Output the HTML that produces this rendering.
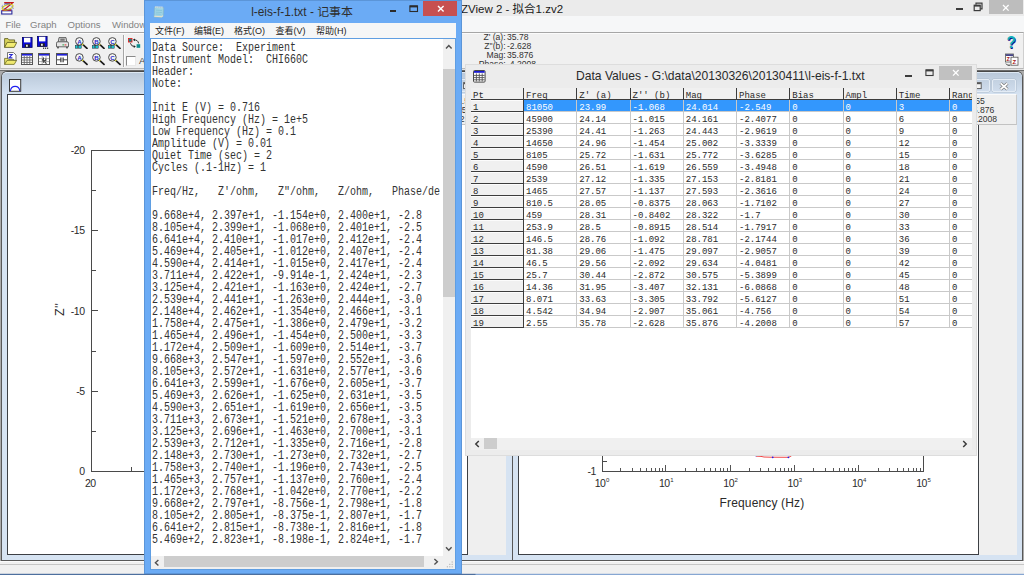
<!DOCTYPE html>
<html>
<head>
<meta charset="utf-8">
<title>ZView 2</title>
<style>
*{box-sizing:border-box;margin:0;padding:0}
html,body{width:1024px;height:575px;overflow:hidden;background:#f0f0f0}
body{font-family:"Liberation Sans","Noto Sans CJK SC",sans-serif;font-size:11px;color:#000;position:relative}
.abs{position:absolute}
#root{position:absolute;left:0;top:0;width:1024px;height:575px;overflow:hidden;background:#f0f0f0}
/* ---------- main ZView window ---------- */
#ztitle{left:0;top:0;width:1024px;height:16px;background:#ebebeb}
#ztitle .cap{left:461px;top:2px;font-size:11.5px;line-height:14px;color:#1a1a1a;white-space:nowrap}
#zmenu{left:0;top:16px;width:1024px;height:16px;background:#f6f7f8}
#zmenu span{position:absolute;top:2px;font-size:9.6px;line-height:13px;color:#838383}
#ztool{left:0;top:32px;width:1024px;height:37px;background:#f0f0f0;border-top:1px solid #a6a6a6;border-left:1px solid #c8c8c8;border-right:1px solid #cfcfcf;border-bottom:1px solid #b8b8b8}
#mdi{left:0;top:69px;width:1024px;height:492px;background:#ababab;border-top:1px solid #e4e4e4}
#mdi i{position:absolute;left:0;top:0;width:1024px;height:1px;background:#6c6c6c}
#status{left:0;top:561px;width:1024px;height:13px;background:#f0f0f0;border-top:1px solid #fafafa}
#status i{position:absolute;left:0;top:2px;width:1024px;height:1px;background:#c6c6c6}
#deskstrip{left:0;top:573px;width:1024px;height:2px;background:linear-gradient(90deg,#4d6f9e 0,#4d6f9e 475px,#86a6d2 476px);border-top:1px solid rgba(240,240,240,0.78)}
.rd{font-size:8.6px;line-height:9px;color:#333;white-space:nowrap}
/* ---------- MDI children ---------- */
.child{background:#d6e3f2;border:1px solid #585858;border-top-color:#484848;border-radius:6px 6px 0 0}
.child .ttl{left:0;top:0;right:0;height:23px;background:linear-gradient(#bac9da,#d6e3f2);border-top:1px solid #dde8f3;border-radius:5px 5px 0 0}
.cbtn{position:absolute;top:7px;height:13px;border:1px solid #e4ecf5;border-radius:2px;background:linear-gradient(#c3d1e1,#cfdcec);box-shadow:0 0 0 0.5px #aebccc}
.plot{background:#fff;border:1px solid #3c3f44}
.side{background:#efefef}
.rpanel{background:#efefef;border-right:1px solid #c9c9c9;border-bottom:1px solid #c2c2c2;border-top:1px solid #fafafa}
.ax{position:absolute;background:#4a4a4a}
.tl{position:absolute;font-size:10.5px;line-height:12px;letter-spacing:-0.5px;color:#2a2a2a;white-space:nowrap}
/* ---------- notepad ---------- */
#np{left:144px;top:0;width:318px;height:574px;background:#6babf5;border:1px solid #5b95d8}
#np .cap{left:-1px;width:316px;top:3.5px;text-align:center;font-size:11.9px;line-height:15px;color:#2e2e2e;white-space:nowrap}
#npmenu{left:5px;top:22px;width:306px;height:15px;background:#f5f6f7}
#npframe{left:5px;top:37px;width:306px;height:532px;background:#5f9ee2}
#npmenu span{position:absolute;top:1px;font-size:9px;line-height:15px;color:#222;white-space:nowrap}
#nptext{left:6px;top:38px;width:292px;height:517px;background:#fff;overflow:hidden}
#nptext pre{position:absolute;left:1px;top:3px;font-family:"Liberation Mono",monospace;font-size:12px;line-height:12px;color:#333;transform:scaleX(0.83333);transform-origin:0 0;white-space:pre}
#npvs{left:298px;top:38px;width:12px;height:517px;background:#f0f0f0}
#nphs{left:6px;top:555px;width:292px;height:13px;background:#f0f0f0}
#npcorner{left:298px;top:555px;width:12px;height:13px;background:#f0f0f0}
.thumb{position:absolute;background:#cdcdcd}
.wbtn{position:absolute}
/* ---------- data values ---------- */
#dv{left:465px;top:64px;width:512px;height:392px;background:#ececec;border:1px solid #dddddd}
#dv .cap{left:110px;top:4px;font-size:12.1px;line-height:15px;color:#2a2a2a;white-space:nowrap}
#grid{left:5px;top:23px;width:501px;height:350px;background:#fff;overflow:hidden}
#dvhs{left:5px;top:373px;width:501px;height:12px;background:#f0f0f0}
.mono{font-family:"Liberation Mono",monospace;font-size:9px;line-height:11px;white-space:pre;color:#2a2a2a}
.mono.sel{color:#fff}
.hl{height:1px;background:#c9c9c9}
.vl{width:1px;background:#c9c9c9}
.dk{background:#3c3c3c}
</style>
</head>
<body>
<div id="root">

<!-- ================= ZView main window ================= -->
<div id="ztitle" class="abs">
  <svg class="abs" style="left:1px;top:1px" width="13" height="14" viewBox="0 0 13 14"><rect x="0.7" y="9.8" width="10.2" height="3.2" fill="#fff" stroke="#2a2a9c" stroke-width="1.1"/><path d="M3.6 2.7h5.4" stroke="#2a2a9c" stroke-width="0.8"/><path d="M3.2 1.7h8.6L2.6 9h7.6" fill="none" stroke="#c41a1a" stroke-width="1.3"/><ellipse cx="6.6" cy="6.2" rx="5.6" ry="2.3" fill="none" stroke="#cfc81c" stroke-width="1.1" transform="rotate(-18 6.6 6.2)"/><ellipse cx="6.6" cy="6.2" rx="5.6" ry="2.6" fill="none" stroke="#3030c0" stroke-width="0.7" stroke-dasharray="0.8 0.9" transform="rotate(14 6.6 6.2)"/></svg>
  <div class="cap abs">ZView 2 - 拟合1.zv2</div>
  <div class="abs" style="left:956px;top:8px;width:6.5px;height:2px;background:#3c3c3c"></div>
  <svg class="abs" style="left:973px;top:2px" width="10" height="10" viewBox="0 0 10 10"><path d="M3 2.8v-1.6h6v5.6h-1.6" fill="none" stroke="#3c3c3c" stroke-width="1.2"/><rect x="1.2" y="3.2" width="6" height="5.4" fill="none" stroke="#3c3c3c" stroke-width="1.2"/><path d="M1.2 3.8h6" stroke="#3c3c3c" stroke-width="1.6"/></svg>
  <div class="abs" style="left:989px;top:0;width:33.5px;height:14px;background:#bdbdbd"></div>
  <svg class="abs" style="left:1002px;top:3.5px" width="8" height="8" viewBox="0 0 8 8"><path d="M1 1l5.6 5.6M6.6 1l-5.6 5.6" stroke="#fff" stroke-width="1.3"/></svg>
</div>
<div id="zmenu" class="abs">
  <span style="left:5.5px">File</span><span style="left:30px">Graph</span><span style="left:67.5px">Options</span><span style="left:112px">Window</span>
</div>
<div id="ztool" class="abs"><div class="abs" style="left:0;top:0;width:1022px;height:1px;background:#fbfbfb"></div></div>
<svg class="abs" style="left:4.3px;top:37px" width="13" height="11" viewBox="0 0 13 11"><path d="M0.6 10.4v-8.8h3.4l1 1.3h5.6v2.4" fill="#d9d35a" stroke="#55551c" stroke-width="0.8"/><path d="M0.6 10.4l2.6-5h9.6l-2.6 5z" fill="#f2ec72" stroke="#55551c" stroke-width="0.8"/></svg>
<svg class="abs" style="left:21.8px;top:37.4px" width="12" height="13" viewBox="0 0 12 13"><rect x="0.4" y="0.4" width="9.7" height="10" fill="#0a0ad8" stroke="#050560" stroke-width="0.8"/><rect x="2" y="0.8" width="6.4" height="4.6" fill="#fff"/><rect x="2.8" y="7.2" width="5" height="3.2" fill="#222"/><rect x="4" y="7.8" width="1.8" height="2" fill="#e8e8e8"/></svg>
<svg class="abs" style="left:36.8px;top:36.2px" width="12" height="13" viewBox="0 0 12 13"><rect x="0.4" y="0.4" width="9.7" height="10" fill="#0a0ad8" stroke="#050560" stroke-width="0.8"/><rect x="2" y="0.8" width="6.4" height="4.6" fill="#fff"/><rect x="2.8" y="7.2" width="5" height="3.2" fill="#222"/><rect x="4" y="7.8" width="1.8" height="2" fill="#e8e8e8"/><rect x="6" y="11.6" width="1.2" height="1.2" fill="#222"/><rect x="8" y="11.6" width="1.2" height="1.2" fill="#222"/><rect x="10" y="11.6" width="1.2" height="1.2" fill="#222"/></svg>
<svg class="abs" style="left:56px;top:37px" width="13" height="12" viewBox="0 0 13 12"><path d="M3 0.6h7l0.8 4.6h-8.6z" fill="#d8d8d8" stroke="#444" stroke-width="0.8"/><rect x="4.3" y="1.6" width="4.4" height="2.2" fill="#777"/><path d="M0.5 6.2q0-1.4 1.4-1.4h9.2q1.4 0 1.4 1.4v3.6h-12z" fill="#e6e6e6" stroke="#444" stroke-width="0.8"/><rect x="1.2" y="9.8" width="1.6" height="1.6" fill="#444"/><rect x="10.2" y="9.8" width="1.6" height="1.6" fill="#444"/><rect x="6.4" y="7.4" width="1.8" height="1" fill="#2aa04a"/><rect x="8.6" y="7.4" width="1.8" height="1" fill="#e03030"/></svg>
<svg class="abs" style="left:74.8px;top:36.8px" width="13" height="12.5" viewBox="0 0 13 12.5"><circle cx="4.4" cy="4.4" r="3.8" fill="#f4f4f4" stroke="#4a4a4a" stroke-width="1"/><text x="4.4" y="6.7" font-family="Liberation Sans,sans-serif" font-size="6.2" font-weight="bold" fill="#2626c8" text-anchor="middle">A</text><path d="M7.4 7.2l4.6 4.2" stroke="#1a1a1a" stroke-width="1.7" stroke-linecap="round"/><path d="M7 6.8l1.3 1.2" stroke="#e8e040" stroke-width="1.2"/><rect x="0.2" y="8.6" width="2.6" height="2.6" fill="#19c8d0" stroke="#123" stroke-width="0.5"/><rect x="3.4" y="8.6" width="2.8" height="2.6" fill="#19c8d0" stroke="#123" stroke-width="0.5"/></svg>
<svg class="abs" style="left:91.6px;top:36.8px" width="13" height="12.5" viewBox="0 0 13 12.5"><circle cx="4.4" cy="4.4" r="3.8" fill="#f4f4f4" stroke="#4a4a4a" stroke-width="1"/><text x="4.4" y="6.7" font-family="Liberation Sans,sans-serif" font-size="6.2" font-weight="bold" fill="#2626c8" text-anchor="middle">B</text><path d="M7.4 7.2l4.6 4.2" stroke="#1a1a1a" stroke-width="1.7" stroke-linecap="round"/><path d="M7 6.8l1.3 1.2" stroke="#e8e040" stroke-width="1.2"/><rect x="0.2" y="8.6" width="2.6" height="2.6" fill="#19c8d0" stroke="#123" stroke-width="0.5"/><rect x="3.4" y="8.6" width="2.8" height="2.6" fill="#19c8d0" stroke="#123" stroke-width="0.5"/></svg>
<svg class="abs" style="left:108.4px;top:36.8px" width="13" height="12.5" viewBox="0 0 13 12.5"><circle cx="4.4" cy="4.4" r="3.8" fill="#f4f4f4" stroke="#4a4a4a" stroke-width="1"/><text x="4.4" y="6.7" font-family="Liberation Sans,sans-serif" font-size="6.2" font-weight="bold" fill="#2626c8" text-anchor="middle">C</text><path d="M7.4 7.2l4.6 4.2" stroke="#1a1a1a" stroke-width="1.7" stroke-linecap="round"/><path d="M7 6.8l1.3 1.2" stroke="#e8e040" stroke-width="1.2"/><rect x="0.2" y="8.6" width="2.6" height="2.6" fill="#19c8d0" stroke="#123" stroke-width="0.5"/><rect x="3.4" y="8.6" width="2.8" height="2.6" fill="#19c8d0" stroke="#123" stroke-width="0.5"/></svg>
<svg class="abs" style="left:4.3px;top:52.4px" width="13" height="13" viewBox="0 0 13 13"><path d="M3.5 0.5h6l2.5 2.5v6h-8.5z" fill="#fff" stroke="#555" stroke-width="0.8"/><path d="M5 2.5h3.2l-3.2 3.4h3.4" fill="none" stroke="#2a2ad0" stroke-width="1.1"/><path d="M0.6 12.4v-6h3l1 1h5.2v1.2" fill="#e9e36a" stroke="#6b6b2a" stroke-width="0.8"/><path d="M0.6 12.4l2.4-4h9.6l-2.4 4z" fill="#efe96f" stroke="#6b6b2a" stroke-width="0.8"/></svg>
<svg class="abs" style="left:21.2px;top:52.8px" width="12" height="12" viewBox="0 0 12 12"><rect x="0.5" y="0.5" width="11" height="11" fill="#fff" stroke="#555" stroke-width="1"/><rect x="1" y="1" width="10" height="1.6" fill="#2222d8"/><path d="M3.25 3v8" stroke="#666" stroke-width="0.9"/><path d="M6 3v8" stroke="#666" stroke-width="0.9"/><path d="M8.75 3v8" stroke="#666" stroke-width="0.9"/><path d="M1 4.6h10" stroke="#666" stroke-width="0.9"/><path d="M1 7h10" stroke="#666" stroke-width="0.9"/><path d="M1 9.4h10" stroke="#666" stroke-width="0.9"/></svg>
<svg class="abs" style="left:37.6px;top:52.8px" width="12" height="12" viewBox="0 0 12 12"><rect x="0.5" y="0.5" width="11" height="11" fill="#fff" stroke="#555" stroke-width="1"/><rect x="1" y="1" width="10" height="1.6" fill="#2222d8"/><path d="M4.2 3v8M8 3v8M1 5.6h10M1 8.6h10" stroke="#999" stroke-width="0.8"/><path d="M4.5 6.2l1.2 3.4l1-1l1.6 2.2M5.4 4.4v3.2h2.4v-2" fill="none" stroke="#222" stroke-width="0.9"/></svg>
<svg class="abs" style="left:56.2px;top:52.8px" width="12" height="12" viewBox="0 0 12 12"><rect x="0.5" y="0.5" width="11" height="11" fill="#fff" stroke="#555" stroke-width="1"/><rect x="1" y="1" width="10" height="1.6" fill="#2222d8"/><path d="M1 6.8h3.8M7.2 6.8h3.8" stroke="#333" stroke-width="0.9"/><path d="M4.9 4.4v4.8M7.1 4.4v4.8" stroke="#222" stroke-width="1.1"/></svg>
<svg class="abs" style="left:74.8px;top:53px" width="13" height="12.5" viewBox="0 0 13 12.5"><circle cx="4.4" cy="4.4" r="3.8" fill="#f4f4f4" stroke="#4a4a4a" stroke-width="1"/><text x="4.4" y="6.7" font-family="Liberation Sans,sans-serif" font-size="6.2" font-weight="bold" fill="#2626c8" text-anchor="middle">A</text><path d="M7.4 7.2l4.6 4.2" stroke="#1a1a1a" stroke-width="1.7" stroke-linecap="round"/><path d="M7 6.8l1.3 1.2" stroke="#e8e040" stroke-width="1.2"/></svg>
<svg class="abs" style="left:91.6px;top:53px" width="13" height="12.5" viewBox="0 0 13 12.5"><circle cx="4.4" cy="4.4" r="3.8" fill="#f4f4f4" stroke="#4a4a4a" stroke-width="1"/><text x="4.4" y="6.7" font-family="Liberation Sans,sans-serif" font-size="6.2" font-weight="bold" fill="#2626c8" text-anchor="middle">B</text><path d="M7.4 7.2l4.6 4.2" stroke="#1a1a1a" stroke-width="1.7" stroke-linecap="round"/><path d="M7 6.8l1.3 1.2" stroke="#e8e040" stroke-width="1.2"/></svg>
<svg class="abs" style="left:108.4px;top:53px" width="13" height="12.5" viewBox="0 0 13 12.5"><circle cx="4.4" cy="4.4" r="3.8" fill="#f4f4f4" stroke="#4a4a4a" stroke-width="1"/><text x="4.4" y="6.7" font-family="Liberation Sans,sans-serif" font-size="6.2" font-weight="bold" fill="#2626c8" text-anchor="middle">C</text><path d="M7.4 7.2l4.6 4.2" stroke="#1a1a1a" stroke-width="1.7" stroke-linecap="round"/><path d="M7 6.8l1.3 1.2" stroke="#e8e040" stroke-width="1.2"/></svg>
<div class="abs" style="left:123px;top:35px;width:1px;height:32px;background:#a6a6a6"></div><div class="abs" style="left:124px;top:35px;width:1px;height:32px;background:#fbfbfb"></div>
<svg class="abs" style="left:128px;top:38px" width="13" height="11" viewBox="0 0 13 11"><rect x="0.4" y="0.4" width="3.6" height="3.6" fill="#0c8c8c" stroke="#e62020" stroke-width="0.9"/><rect x="8.6" y="6.2" width="3.6" height="3.6" fill="#0c8c8c"/><path d="M5.6 1.8q4.6 0 5 3.6" fill="none" stroke="#222" stroke-width="0.9"/><path d="M5 1.8l2-1.4v2.8z" fill="#222"/><path d="M2.4 5.2q0.8 3.4 4.4 3.4" fill="none" stroke="#222" stroke-width="0.9"/><path d="M7.8 8.6l-2-1.4v2.8z" fill="#222"/></svg>
<div class="abs" style="left:126px;top:56px;width:9.5px;height:9.5px;background:#fff;border:1px solid #e8e8e8;border-top-color:#8a8a8a;border-left-color:#8a8a8a"></div>
<div class="abs" style="left:139px;top:55px;font-size:9.5px;line-height:12px;color:#444">All</div>
<div class="abs rd" style="left:455px;width:50.6px;top:33px;text-align:right">Z' (a):</div><div class="abs rd" style="left:507px;top:33px">35.78</div>
<div class="abs rd" style="left:455px;width:50.6px;top:42px;text-align:right">Z''(b):</div><div class="abs rd" style="left:507px;top:42px">-2.628</div>
<div class="abs rd" style="left:455px;width:50.6px;top:51px;text-align:right">Mag:</div><div class="abs rd" style="left:507px;top:51px">35.876</div>
<div class="abs rd" style="left:455px;width:50.6px;top:60px;text-align:right">Phase:</div><div class="abs rd" style="left:507px;top:60px">-4.2008</div>
<div class="abs" style="left:1005.5px;top:33.5px;font-size:17px;line-height:18px;font-weight:bold;color:#14b0ba;transform:scaleX(0.9);text-shadow:0.7px 0.7px 0 #10108a">?</div>
<svg class="abs" style="left:1004.5px;top:52.5px" width="14" height="13" viewBox="0 0 14 13"><rect x="0.5" y="1" width="8" height="8" fill="#fff" stroke="#555" stroke-width="0.8"/><rect x="0.9" y="1.4" width="7.2" height="1.4" fill="#1a1a6e"/><text x="1.4" y="7.6" font-family="Liberation Sans,sans-serif" font-size="5.5" font-weight="bold" fill="#a81414">Z</text><rect x="6" y="4.2" width="7" height="8" fill="#fff" stroke="#555" stroke-width="0.8"/><text x="7.6" y="11" font-family="Liberation Sans,sans-serif" font-size="6" font-weight="bold" fill="#a81414">Z</text><path d="M1 10.6l1.6 1.6h2.6" fill="none" stroke="#222" stroke-width="0.9"/></svg>
<div id="mdi" class="abs"><i></i></div>
<div id="status" class="abs"><i></i></div>

<!-- ================= Nyquist child ================= -->
<div id="c1" class="abs child" style="left:1px;top:71px;width:512px;height:490px">
  <div class="ttl abs"></div>
  <svg class="abs" style="left:7px;top:7px" width="14" height="14" viewBox="0 0 14 14"><rect x="0.5" y="0.5" width="11.2" height="11.8" fill="#fff" stroke="#3a3a3a" stroke-width="1"/><path d="M1.4 12q0.6-4.6 4.7-4.6t4.7 4.6" fill="none" stroke="#2020f0" stroke-width="1.1"/></svg>
  <div class="cbtn" style="left:430px;width:24px"></div>
  <div class="cbtn" style="left:454px;width:24px"><svg class="abs" style="left:6px;top:2px" width="9" height="8" viewBox="0 0 9 8"><rect x="0.6" y="0.6" width="7.6" height="6" fill="#f4f4f4" stroke="#555" stroke-width="0.9"/><path d="M1 1.6h6.8" stroke="#555" stroke-width="1.2"/></svg></div>
  <div class="cbtn" style="left:479px;width:24px"></div>
</div>
<div class="abs plot" style="left:7px;top:94px;width:461px;height:461px"></div>
<div class="abs side" style="left:468px;top:95px;width:38px;height:460px"></div>
<div class="abs rpanel" style="left:430px;top:94px;width:76px;height:31px"></div>
<div class="abs rd" style="left:420px;width:35px;top:97px;text-align:right">Freq:</div><div class="abs rd" style="left:457px;top:97px">2.55</div>
<div class="abs rd" style="left:420px;width:35px;top:106px;text-align:right">Z':</div><div class="abs rd" style="left:457px;top:106px">35.78</div>
<div class="abs rd" style="left:420px;width:35px;top:115px;text-align:right">Z'':</div><div class="abs rd" style="left:457px;top:115px">-2.628</div>
<div class="ax" style="left:91px;top:150px;width:1px;height:322px"></div>
<div class="ax" style="left:91px;top:150px;width:60px;height:1px"></div>
<div class="ax" style="left:91px;top:471px;width:60px;height:1px"></div>
<div class="ax" style="left:91px;top:190px;width:5px;height:1px"></div>
<div class="ax" style="left:91px;top:230px;width:7px;height:1px"></div>
<div class="ax" style="left:91px;top:270px;width:5px;height:1px"></div>
<div class="ax" style="left:91px;top:310px;width:7px;height:1px"></div>
<div class="ax" style="left:91px;top:351px;width:5px;height:1px"></div>
<div class="ax" style="left:91px;top:391px;width:7px;height:1px"></div>
<div class="ax" style="left:91px;top:431px;width:5px;height:1px"></div>
<div class="ax" style="left:131px;top:467px;width:1px;height:4px"></div>
<div class="tl" style="left:40px;width:44.5px;text-align:right;top:144px">-20</div>
<div class="tl" style="left:40px;width:44.5px;text-align:right;top:224px">-15</div>
<div class="tl" style="left:40px;width:44.5px;text-align:right;top:305px">-10</div>
<div class="tl" style="left:40px;width:44.5px;text-align:right;top:385px">-5</div>
<div class="tl" style="left:40px;width:44.5px;text-align:right;top:465px">0</div>
<div class="tl" style="left:85px;top:477px">20</div>
<div class="tl" style="left:54px;top:304px;width:12px;height:12px;transform:rotate(-90deg);font-size:12.5px;letter-spacing:0.3px">Z''</div>

<!-- ================= Bode child ================= -->
<div id="c2" class="abs child" style="left:512px;top:71px;width:511px;height:490px">
  <div class="ttl abs"></div>
  <div class="cbtn" style="left:428px;width:24px"></div>
  <div class="cbtn" style="left:452.5px;width:24px"><svg class="abs" style="left:6px;top:2px" width="9" height="8" viewBox="0 0 9 8"><rect x="0.6" y="0.6" width="7.6" height="6" fill="#f4f4f4" stroke="#555" stroke-width="0.9"/><path d="M1 1.6h6.8" stroke="#555" stroke-width="1.2"/></svg></div>
  <div class="cbtn" style="left:478.5px;width:24px"><svg class="abs" style="left:6px;top:1.5px" width="10" height="9" viewBox="0 0 10 9"><path d="M1.6 1.4l6.8 6M8.4 1.4l-6.8 6" stroke="#777" stroke-width="3.2"/><path d="M1.6 1.4l6.8 6M8.4 1.4l-6.8 6" stroke="#fff" stroke-width="1.9"/></svg></div>
</div>
<div class="abs plot" style="left:518px;top:94px;width:461px;height:461px"></div>
<div class="abs side" style="left:979px;top:95px;width:38px;height:460px"></div>
<div class="abs rpanel" style="left:941px;top:94px;width:76px;height:31px"></div>
<div class="abs rd" style="left:931px;width:35px;top:97px;text-align:right">Freq:</div><div class="abs rd" style="left:968px;top:97px">2.55</div>
<div class="abs rd" style="left:931px;width:35px;top:106px;text-align:right">Mag:</div><div class="abs rd" style="left:968px;top:106px">35.876</div>
<div class="abs rd" style="left:931px;width:35px;top:115px;text-align:right">Phase:</div><div class="abs rd" style="left:968px;top:115px">-4.2008</div>
<div class="ax" style="left:602px;top:452px;width:1px;height:20px"></div>
<div class="ax" style="left:923px;top:452px;width:1px;height:20px"></div>
<div class="ax" style="left:602px;top:471px;width:322px;height:1px"></div>
<div class="ax" style="left:602px;top:461px;width:5px;height:1px"></div>
<div class="ax" style="left:620px;top:468px;width:1px;height:3px;background:#555"></div>
<div class="ax" style="left:632px;top:468px;width:1px;height:3px;background:#555"></div>
<div class="ax" style="left:640px;top:468px;width:1px;height:3px;background:#555"></div>
<div class="ax" style="left:646px;top:468px;width:1px;height:3px;background:#555"></div>
<div class="ax" style="left:651px;top:468px;width:1px;height:3px;background:#555"></div>
<div class="ax" style="left:655px;top:468px;width:1px;height:3px;background:#555"></div>
<div class="ax" style="left:659px;top:468px;width:1px;height:3px;background:#555"></div>
<div class="ax" style="left:662px;top:468px;width:1px;height:3px;background:#555"></div>
<div class="ax" style="left:665px;top:465px;width:1px;height:6px;background:#555"></div>
<div class="ax" style="left:685px;top:468px;width:1px;height:3px;background:#555"></div>
<div class="ax" style="left:696px;top:468px;width:1px;height:3px;background:#555"></div>
<div class="ax" style="left:704px;top:468px;width:1px;height:3px;background:#555"></div>
<div class="ax" style="left:710px;top:468px;width:1px;height:3px;background:#555"></div>
<div class="ax" style="left:715px;top:468px;width:1px;height:3px;background:#555"></div>
<div class="ax" style="left:720px;top:468px;width:1px;height:3px;background:#555"></div>
<div class="ax" style="left:723px;top:468px;width:1px;height:3px;background:#555"></div>
<div class="ax" style="left:727px;top:468px;width:1px;height:3px;background:#555"></div>
<div class="ax" style="left:730px;top:465px;width:1px;height:6px;background:#555"></div>
<div class="ax" style="left:749px;top:468px;width:1px;height:3px;background:#555"></div>
<div class="ax" style="left:760px;top:468px;width:1px;height:3px;background:#555"></div>
<div class="ax" style="left:768px;top:468px;width:1px;height:3px;background:#555"></div>
<div class="ax" style="left:775px;top:468px;width:1px;height:3px;background:#555"></div>
<div class="ax" style="left:780px;top:468px;width:1px;height:3px;background:#555"></div>
<div class="ax" style="left:784px;top:468px;width:1px;height:3px;background:#555"></div>
<div class="ax" style="left:788px;top:468px;width:1px;height:3px;background:#555"></div>
<div class="ax" style="left:791px;top:468px;width:1px;height:3px;background:#555"></div>
<div class="ax" style="left:794px;top:465px;width:1px;height:6px;background:#555"></div>
<div class="ax" style="left:813px;top:468px;width:1px;height:3px;background:#555"></div>
<div class="ax" style="left:825px;top:468px;width:1px;height:3px;background:#555"></div>
<div class="ax" style="left:833px;top:468px;width:1px;height:3px;background:#555"></div>
<div class="ax" style="left:839px;top:468px;width:1px;height:3px;background:#555"></div>
<div class="ax" style="left:844px;top:468px;width:1px;height:3px;background:#555"></div>
<div class="ax" style="left:848px;top:468px;width:1px;height:3px;background:#555"></div>
<div class="ax" style="left:852px;top:468px;width:1px;height:3px;background:#555"></div>
<div class="ax" style="left:855px;top:468px;width:1px;height:3px;background:#555"></div>
<div class="ax" style="left:858px;top:465px;width:1px;height:6px;background:#555"></div>
<div class="ax" style="left:878px;top:468px;width:1px;height:3px;background:#555"></div>
<div class="ax" style="left:889px;top:468px;width:1px;height:3px;background:#555"></div>
<div class="ax" style="left:897px;top:468px;width:1px;height:3px;background:#555"></div>
<div class="ax" style="left:903px;top:468px;width:1px;height:3px;background:#555"></div>
<div class="ax" style="left:908px;top:468px;width:1px;height:3px;background:#555"></div>
<div class="ax" style="left:913px;top:468px;width:1px;height:3px;background:#555"></div>
<div class="ax" style="left:916px;top:468px;width:1px;height:3px;background:#555"></div>
<div class="ax" style="left:920px;top:468px;width:1px;height:3px;background:#555"></div>
<div class="tl" style="left:594.7px;top:477px">10<span style="font-size:6px;position:relative;top:-5px;left:0.5px">0</span></div>
<div class="tl" style="left:659px;top:477px">10<span style="font-size:6px;position:relative;top:-5px;left:0.5px">1</span></div>
<div class="tl" style="left:723.3px;top:477px">10<span style="font-size:6px;position:relative;top:-5px;left:0.5px">2</span></div>
<div class="tl" style="left:787.6px;top:477px">10<span style="font-size:6px;position:relative;top:-5px;left:0.5px">3</span></div>
<div class="tl" style="left:851.9px;top:477px">10<span style="font-size:6px;position:relative;top:-5px;left:0.5px">4</span></div>
<div class="tl" style="left:916.2px;top:477px">10<span style="font-size:6px;position:relative;top:-5px;left:0.5px">5</span></div>
<div class="tl" style="left:587.5px;top:465px">-1</div>
<div class="tl" style="left:699px;width:126px;text-align:center;top:496px;font-size:12px;letter-spacing:0.15px;line-height:14px"><span id="fq">Frequency (Hz)</span></div>
<svg class="abs" style="left:750px;top:452px" width="50" height="8" viewBox="0 0 50 8"><path d="M6 4.2L11 4.4L14 5L20 5.2L38.5 5.3L41 4.2" fill="none" stroke="#f04848" stroke-width="1"/><circle cx="22.7" cy="5.3" r="0.9" fill="#2222ee"/><circle cx="38.4" cy="5.3" r="0.9" fill="#2222ee"/><circle cx="6" cy="4.1" r="0.7" fill="#7a7aee"/><circle cx="41" cy="4" r="0.6" fill="#e88"/></svg>

<!-- ================= Data Values ================= -->
<div id="dv" class="abs">
  <svg class="abs" style="left:7px;top:5px" width="13" height="13" viewBox="0 0 13 13"><rect x="0.5" y="0.5" width="11.6" height="11.6" rx="1" fill="#fff" stroke="#4a4a4a" stroke-width="1"/><rect x="1" y="1" width="10.6" height="1.8" fill="#1a1ad0"/><path d="M3.4 3.4v8M6.3 3.4v8M9.2 3.4v8M1 5.4h10.6M1 7.6h10.6M1 9.8h10.6" stroke="#555" stroke-width="0.9"/></svg>
  <div class="cap abs"><span>Data Values - G:\data\20130326\20130411\l-eis-f-1.txt</span></div>
  <div class="abs" style="left:439px;top:9.5px;width:6.5px;height:2px;background:#3c3c3c"></div>
  <svg class="abs" style="left:459px;top:4.2px" width="10" height="9" viewBox="0 0 10 9"><rect x="0.9" y="0.9" width="7.2" height="5.6" fill="none" stroke="#3c3c3c" stroke-width="1.1"/><path d="M0.9 1.5h7.4" stroke="#3c3c3c" stroke-width="1.8"/></svg>
  <div class="abs" style="left:472.5px;top:0.5px;width:33.5px;height:14.5px;background:#c1c1c1"></div>
  <svg class="abs" style="left:485.5px;top:4px" width="8" height="8" viewBox="0 0 8 8"><path d="M1 1l5.6 5.6M6.6 1l-5.6 5.6" stroke="#fff" stroke-width="1.3"/></svg>
  <div id="grid" class="abs">
<div class="abs" style="left:0;top:0;width:501px;height:11.5px;background:#f0f0f0"></div>
<div class="abs" style="left:0;top:0;width:52.5px;height:239.5px;background:#f0f0f0"></div>
<div class="abs" style="left:53px;top:12px;width:448.5px;height:11.5px;background:#3397fd"></div>
<div class="abs hl" style="left:52.5px;top:23px;width:448.5px"></div>
<div class="abs hl" style="left:52.5px;top:35px;width:448.5px"></div>
<div class="abs hl" style="left:52.5px;top:47px;width:448.5px"></div>
<div class="abs hl" style="left:52.5px;top:59px;width:448.5px"></div>
<div class="abs hl" style="left:52.5px;top:71px;width:448.5px"></div>
<div class="abs hl" style="left:52.5px;top:83px;width:448.5px"></div>
<div class="abs hl" style="left:52.5px;top:95px;width:448.5px"></div>
<div class="abs hl" style="left:52.5px;top:107px;width:448.5px"></div>
<div class="abs hl" style="left:52.5px;top:119px;width:448.5px"></div>
<div class="abs hl" style="left:52.5px;top:131px;width:448.5px"></div>
<div class="abs hl" style="left:52.5px;top:143px;width:448.5px"></div>
<div class="abs hl" style="left:52.5px;top:155px;width:448.5px"></div>
<div class="abs hl" style="left:52.5px;top:167px;width:448.5px"></div>
<div class="abs hl" style="left:52.5px;top:179px;width:448.5px"></div>
<div class="abs hl" style="left:52.5px;top:191px;width:448.5px"></div>
<div class="abs hl" style="left:52.5px;top:203px;width:448.5px"></div>
<div class="abs hl" style="left:52.5px;top:215px;width:448.5px"></div>
<div class="abs hl" style="left:52.5px;top:227px;width:448.5px"></div>
<div class="abs hl" style="left:52.5px;top:239px;width:448.5px"></div>
<div class="abs vl" style="left:105.25px;top:11.5px;height:228px"></div>
<div class="abs vl" style="left:158.5px;top:11.5px;height:228px"></div>
<div class="abs vl" style="left:211.75px;top:11.5px;height:228px"></div>
<div class="abs vl" style="left:265px;top:11.5px;height:228px"></div>
<div class="abs vl" style="left:318.25px;top:11.5px;height:228px"></div>
<div class="abs vl" style="left:371.5px;top:11.5px;height:228px"></div>
<div class="abs vl" style="left:424.75px;top:11.5px;height:228px"></div>
<div class="abs vl" style="left:478px;top:11.5px;height:228px"></div>
<div class="abs vl" style="left:531.25px;top:11.5px;height:228px"></div>
<div class="abs dk" style="left:0;top:10.5px;width:501px;height:1.5px"></div>
<div class="abs dk" style="left:52px;top:0;width:1px;height:11.5px"></div>
<div class="abs dk" style="left:105px;top:0;width:1px;height:11.5px"></div>
<div class="abs dk" style="left:159px;top:0;width:1px;height:11.5px"></div>
<div class="abs dk" style="left:212px;top:0;width:1px;height:11.5px"></div>
<div class="abs dk" style="left:265px;top:0;width:1px;height:11.5px"></div>
<div class="abs dk" style="left:318px;top:0;width:1px;height:11.5px"></div>
<div class="abs dk" style="left:372px;top:0;width:1px;height:11.5px"></div>
<div class="abs dk" style="left:425px;top:0;width:1px;height:11.5px"></div>
<div class="abs dk" style="left:478px;top:0;width:1px;height:11.5px"></div>
<div class="abs dk" style="left:531px;top:0;width:1px;height:11.5px"></div>
<div class="abs dk" style="left:51.5px;top:0;width:1.5px;height:239.5px"></div>
<div class="abs" style="left:0;top:12px;width:51.5px;height:1px;background:#fcfcfc"></div>
<div class="abs" style="left:0;top:24px;width:51.5px;height:1px;background:#fcfcfc"></div>
<div class="abs" style="left:0;top:36px;width:51.5px;height:1px;background:#fcfcfc"></div>
<div class="abs" style="left:0;top:48px;width:51.5px;height:1px;background:#fcfcfc"></div>
<div class="abs" style="left:0;top:60px;width:51.5px;height:1px;background:#fcfcfc"></div>
<div class="abs" style="left:0;top:72px;width:51.5px;height:1px;background:#fcfcfc"></div>
<div class="abs" style="left:0;top:84px;width:51.5px;height:1px;background:#fcfcfc"></div>
<div class="abs" style="left:0;top:96px;width:51.5px;height:1px;background:#fcfcfc"></div>
<div class="abs" style="left:0;top:108px;width:51.5px;height:1px;background:#fcfcfc"></div>
<div class="abs" style="left:0;top:120px;width:51.5px;height:1px;background:#fcfcfc"></div>
<div class="abs" style="left:0;top:132px;width:51.5px;height:1px;background:#fcfcfc"></div>
<div class="abs" style="left:0;top:144px;width:51.5px;height:1px;background:#fcfcfc"></div>
<div class="abs" style="left:0;top:156px;width:51.5px;height:1px;background:#fcfcfc"></div>
<div class="abs" style="left:0;top:168px;width:51.5px;height:1px;background:#fcfcfc"></div>
<div class="abs" style="left:0;top:180px;width:51.5px;height:1px;background:#fcfcfc"></div>
<div class="abs" style="left:0;top:192px;width:51.5px;height:1px;background:#fcfcfc"></div>
<div class="abs" style="left:0;top:204px;width:51.5px;height:1px;background:#fcfcfc"></div>
<div class="abs" style="left:0;top:216px;width:51.5px;height:1px;background:#fcfcfc"></div>
<div class="abs" style="left:0;top:228px;width:51.5px;height:1px;background:#fcfcfc"></div>
<div class="abs dk" style="left:0;top:22.5px;width:52.5px;height:1.5px"></div>
<div class="abs dk" style="left:0;top:34.5px;width:52.5px;height:1.5px"></div>
<div class="abs dk" style="left:0;top:46.5px;width:52.5px;height:1.5px"></div>
<div class="abs dk" style="left:0;top:58.5px;width:52.5px;height:1.5px"></div>
<div class="abs dk" style="left:0;top:70.5px;width:52.5px;height:1.5px"></div>
<div class="abs dk" style="left:0;top:82.5px;width:52.5px;height:1.5px"></div>
<div class="abs dk" style="left:0;top:94.5px;width:52.5px;height:1.5px"></div>
<div class="abs dk" style="left:0;top:106.5px;width:52.5px;height:1.5px"></div>
<div class="abs dk" style="left:0;top:118.5px;width:52.5px;height:1.5px"></div>
<div class="abs dk" style="left:0;top:130.5px;width:52.5px;height:1.5px"></div>
<div class="abs dk" style="left:0;top:142.5px;width:52.5px;height:1.5px"></div>
<div class="abs dk" style="left:0;top:154.5px;width:52.5px;height:1.5px"></div>
<div class="abs dk" style="left:0;top:166.5px;width:52.5px;height:1.5px"></div>
<div class="abs dk" style="left:0;top:178.5px;width:52.5px;height:1.5px"></div>
<div class="abs dk" style="left:0;top:190.5px;width:52.5px;height:1.5px"></div>
<div class="abs dk" style="left:0;top:202.5px;width:52.5px;height:1.5px"></div>
<div class="abs dk" style="left:0;top:214.5px;width:52.5px;height:1.5px"></div>
<div class="abs dk" style="left:0;top:226.5px;width:52.5px;height:1.5px"></div>
<div class="abs dk" style="left:0;top:238.5px;width:52.5px;height:1.5px"></div>
<div class="abs mono hd" style="left:2px;top:2.5px">Pt</div>
<div class="abs mono hd" style="left:55px;top:2.5px">Freq</div>
<div class="abs mono hd" style="left:108.25px;top:2.5px">Z' (a)</div>
<div class="abs mono hd" style="left:161.5px;top:2.5px">Z'' (b)</div>
<div class="abs mono hd" style="left:214.75px;top:2.5px">Mag</div>
<div class="abs mono hd" style="left:268px;top:2.5px">Phase</div>
<div class="abs mono hd" style="left:321.25px;top:2.5px">Bias</div>
<div class="abs mono hd" style="left:374.5px;top:2.5px">Ampl</div>
<div class="abs mono hd" style="left:427.75px;top:2.5px">Time</div>
<div class="abs mono hd" style="left:481px;top:2.5px">Range</div>
<div class="abs mono" style="left:2px;top:15px">1</div>
<div class="abs mono sel" style="left:55px;top:15px">81050</div>
<div class="abs mono sel" style="left:108.25px;top:15px">23.99</div>
<div class="abs mono sel" style="left:161.5px;top:15px">-1.068</div>
<div class="abs mono sel" style="left:214.75px;top:15px">24.014</div>
<div class="abs mono sel" style="left:268px;top:15px">-2.549</div>
<div class="abs mono sel" style="left:321.25px;top:15px">0</div>
<div class="abs mono sel" style="left:374.5px;top:15px">0</div>
<div class="abs mono sel" style="left:427.75px;top:15px">3</div>
<div class="abs mono sel" style="left:481px;top:15px">0</div>
<div class="abs mono" style="left:2px;top:27px">2</div>
<div class="abs mono" style="left:55px;top:27px">45900</div>
<div class="abs mono" style="left:108.25px;top:27px">24.14</div>
<div class="abs mono" style="left:161.5px;top:27px">-1.015</div>
<div class="abs mono" style="left:214.75px;top:27px">24.161</div>
<div class="abs mono" style="left:268px;top:27px">-2.4077</div>
<div class="abs mono" style="left:321.25px;top:27px">0</div>
<div class="abs mono" style="left:374.5px;top:27px">0</div>
<div class="abs mono" style="left:427.75px;top:27px">6</div>
<div class="abs mono" style="left:481px;top:27px">0</div>
<div class="abs mono" style="left:2px;top:39px">3</div>
<div class="abs mono" style="left:55px;top:39px">25390</div>
<div class="abs mono" style="left:108.25px;top:39px">24.41</div>
<div class="abs mono" style="left:161.5px;top:39px">-1.263</div>
<div class="abs mono" style="left:214.75px;top:39px">24.443</div>
<div class="abs mono" style="left:268px;top:39px">-2.9619</div>
<div class="abs mono" style="left:321.25px;top:39px">0</div>
<div class="abs mono" style="left:374.5px;top:39px">0</div>
<div class="abs mono" style="left:427.75px;top:39px">9</div>
<div class="abs mono" style="left:481px;top:39px">0</div>
<div class="abs mono" style="left:2px;top:51px">4</div>
<div class="abs mono" style="left:55px;top:51px">14650</div>
<div class="abs mono" style="left:108.25px;top:51px">24.96</div>
<div class="abs mono" style="left:161.5px;top:51px">-1.454</div>
<div class="abs mono" style="left:214.75px;top:51px">25.002</div>
<div class="abs mono" style="left:268px;top:51px">-3.3339</div>
<div class="abs mono" style="left:321.25px;top:51px">0</div>
<div class="abs mono" style="left:374.5px;top:51px">0</div>
<div class="abs mono" style="left:427.75px;top:51px">12</div>
<div class="abs mono" style="left:481px;top:51px">0</div>
<div class="abs mono" style="left:2px;top:63px">5</div>
<div class="abs mono" style="left:55px;top:63px">8105</div>
<div class="abs mono" style="left:108.25px;top:63px">25.72</div>
<div class="abs mono" style="left:161.5px;top:63px">-1.631</div>
<div class="abs mono" style="left:214.75px;top:63px">25.772</div>
<div class="abs mono" style="left:268px;top:63px">-3.6285</div>
<div class="abs mono" style="left:321.25px;top:63px">0</div>
<div class="abs mono" style="left:374.5px;top:63px">0</div>
<div class="abs mono" style="left:427.75px;top:63px">15</div>
<div class="abs mono" style="left:481px;top:63px">0</div>
<div class="abs mono" style="left:2px;top:75px">6</div>
<div class="abs mono" style="left:55px;top:75px">4590</div>
<div class="abs mono" style="left:108.25px;top:75px">26.51</div>
<div class="abs mono" style="left:161.5px;top:75px">-1.619</div>
<div class="abs mono" style="left:214.75px;top:75px">26.559</div>
<div class="abs mono" style="left:268px;top:75px">-3.4948</div>
<div class="abs mono" style="left:321.25px;top:75px">0</div>
<div class="abs mono" style="left:374.5px;top:75px">0</div>
<div class="abs mono" style="left:427.75px;top:75px">18</div>
<div class="abs mono" style="left:481px;top:75px">0</div>
<div class="abs mono" style="left:2px;top:87px">7</div>
<div class="abs mono" style="left:55px;top:87px">2539</div>
<div class="abs mono" style="left:108.25px;top:87px">27.12</div>
<div class="abs mono" style="left:161.5px;top:87px">-1.335</div>
<div class="abs mono" style="left:214.75px;top:87px">27.153</div>
<div class="abs mono" style="left:268px;top:87px">-2.8181</div>
<div class="abs mono" style="left:321.25px;top:87px">0</div>
<div class="abs mono" style="left:374.5px;top:87px">0</div>
<div class="abs mono" style="left:427.75px;top:87px">21</div>
<div class="abs mono" style="left:481px;top:87px">0</div>
<div class="abs mono" style="left:2px;top:99px">8</div>
<div class="abs mono" style="left:55px;top:99px">1465</div>
<div class="abs mono" style="left:108.25px;top:99px">27.57</div>
<div class="abs mono" style="left:161.5px;top:99px">-1.137</div>
<div class="abs mono" style="left:214.75px;top:99px">27.593</div>
<div class="abs mono" style="left:268px;top:99px">-2.3616</div>
<div class="abs mono" style="left:321.25px;top:99px">0</div>
<div class="abs mono" style="left:374.5px;top:99px">0</div>
<div class="abs mono" style="left:427.75px;top:99px">24</div>
<div class="abs mono" style="left:481px;top:99px">0</div>
<div class="abs mono" style="left:2px;top:111px">9</div>
<div class="abs mono" style="left:55px;top:111px">810.5</div>
<div class="abs mono" style="left:108.25px;top:111px">28.05</div>
<div class="abs mono" style="left:161.5px;top:111px">-0.8375</div>
<div class="abs mono" style="left:214.75px;top:111px">28.063</div>
<div class="abs mono" style="left:268px;top:111px">-1.7102</div>
<div class="abs mono" style="left:321.25px;top:111px">0</div>
<div class="abs mono" style="left:374.5px;top:111px">0</div>
<div class="abs mono" style="left:427.75px;top:111px">27</div>
<div class="abs mono" style="left:481px;top:111px">0</div>
<div class="abs mono" style="left:2px;top:123px">10</div>
<div class="abs mono" style="left:55px;top:123px">459</div>
<div class="abs mono" style="left:108.25px;top:123px">28.31</div>
<div class="abs mono" style="left:161.5px;top:123px">-0.8402</div>
<div class="abs mono" style="left:214.75px;top:123px">28.322</div>
<div class="abs mono" style="left:268px;top:123px">-1.7</div>
<div class="abs mono" style="left:321.25px;top:123px">0</div>
<div class="abs mono" style="left:374.5px;top:123px">0</div>
<div class="abs mono" style="left:427.75px;top:123px">30</div>
<div class="abs mono" style="left:481px;top:123px">0</div>
<div class="abs mono" style="left:2px;top:135px">11</div>
<div class="abs mono" style="left:55px;top:135px">253.9</div>
<div class="abs mono" style="left:108.25px;top:135px">28.5</div>
<div class="abs mono" style="left:161.5px;top:135px">-0.8915</div>
<div class="abs mono" style="left:214.75px;top:135px">28.514</div>
<div class="abs mono" style="left:268px;top:135px">-1.7917</div>
<div class="abs mono" style="left:321.25px;top:135px">0</div>
<div class="abs mono" style="left:374.5px;top:135px">0</div>
<div class="abs mono" style="left:427.75px;top:135px">33</div>
<div class="abs mono" style="left:481px;top:135px">0</div>
<div class="abs mono" style="left:2px;top:147px">12</div>
<div class="abs mono" style="left:55px;top:147px">146.5</div>
<div class="abs mono" style="left:108.25px;top:147px">28.76</div>
<div class="abs mono" style="left:161.5px;top:147px">-1.092</div>
<div class="abs mono" style="left:214.75px;top:147px">28.781</div>
<div class="abs mono" style="left:268px;top:147px">-2.1744</div>
<div class="abs mono" style="left:321.25px;top:147px">0</div>
<div class="abs mono" style="left:374.5px;top:147px">0</div>
<div class="abs mono" style="left:427.75px;top:147px">36</div>
<div class="abs mono" style="left:481px;top:147px">0</div>
<div class="abs mono" style="left:2px;top:159px">13</div>
<div class="abs mono" style="left:55px;top:159px">81.38</div>
<div class="abs mono" style="left:108.25px;top:159px">29.06</div>
<div class="abs mono" style="left:161.5px;top:159px">-1.475</div>
<div class="abs mono" style="left:214.75px;top:159px">29.097</div>
<div class="abs mono" style="left:268px;top:159px">-2.9057</div>
<div class="abs mono" style="left:321.25px;top:159px">0</div>
<div class="abs mono" style="left:374.5px;top:159px">0</div>
<div class="abs mono" style="left:427.75px;top:159px">39</div>
<div class="abs mono" style="left:481px;top:159px">0</div>
<div class="abs mono" style="left:2px;top:171px">14</div>
<div class="abs mono" style="left:55px;top:171px">46.5</div>
<div class="abs mono" style="left:108.25px;top:171px">29.56</div>
<div class="abs mono" style="left:161.5px;top:171px">-2.092</div>
<div class="abs mono" style="left:214.75px;top:171px">29.634</div>
<div class="abs mono" style="left:268px;top:171px">-4.0481</div>
<div class="abs mono" style="left:321.25px;top:171px">0</div>
<div class="abs mono" style="left:374.5px;top:171px">0</div>
<div class="abs mono" style="left:427.75px;top:171px">42</div>
<div class="abs mono" style="left:481px;top:171px">0</div>
<div class="abs mono" style="left:2px;top:183px">15</div>
<div class="abs mono" style="left:55px;top:183px">25.7</div>
<div class="abs mono" style="left:108.25px;top:183px">30.44</div>
<div class="abs mono" style="left:161.5px;top:183px">-2.872</div>
<div class="abs mono" style="left:214.75px;top:183px">30.575</div>
<div class="abs mono" style="left:268px;top:183px">-5.3899</div>
<div class="abs mono" style="left:321.25px;top:183px">0</div>
<div class="abs mono" style="left:374.5px;top:183px">0</div>
<div class="abs mono" style="left:427.75px;top:183px">45</div>
<div class="abs mono" style="left:481px;top:183px">0</div>
<div class="abs mono" style="left:2px;top:195px">16</div>
<div class="abs mono" style="left:55px;top:195px">14.36</div>
<div class="abs mono" style="left:108.25px;top:195px">31.95</div>
<div class="abs mono" style="left:161.5px;top:195px">-3.407</div>
<div class="abs mono" style="left:214.75px;top:195px">32.131</div>
<div class="abs mono" style="left:268px;top:195px">-6.0868</div>
<div class="abs mono" style="left:321.25px;top:195px">0</div>
<div class="abs mono" style="left:374.5px;top:195px">0</div>
<div class="abs mono" style="left:427.75px;top:195px">48</div>
<div class="abs mono" style="left:481px;top:195px">0</div>
<div class="abs mono" style="left:2px;top:207px">17</div>
<div class="abs mono" style="left:55px;top:207px">8.071</div>
<div class="abs mono" style="left:108.25px;top:207px">33.63</div>
<div class="abs mono" style="left:161.5px;top:207px">-3.305</div>
<div class="abs mono" style="left:214.75px;top:207px">33.792</div>
<div class="abs mono" style="left:268px;top:207px">-5.6127</div>
<div class="abs mono" style="left:321.25px;top:207px">0</div>
<div class="abs mono" style="left:374.5px;top:207px">0</div>
<div class="abs mono" style="left:427.75px;top:207px">51</div>
<div class="abs mono" style="left:481px;top:207px">0</div>
<div class="abs mono" style="left:2px;top:219px">18</div>
<div class="abs mono" style="left:55px;top:219px">4.542</div>
<div class="abs mono" style="left:108.25px;top:219px">34.94</div>
<div class="abs mono" style="left:161.5px;top:219px">-2.907</div>
<div class="abs mono" style="left:214.75px;top:219px">35.061</div>
<div class="abs mono" style="left:268px;top:219px">-4.756</div>
<div class="abs mono" style="left:321.25px;top:219px">0</div>
<div class="abs mono" style="left:374.5px;top:219px">0</div>
<div class="abs mono" style="left:427.75px;top:219px">54</div>
<div class="abs mono" style="left:481px;top:219px">0</div>
<div class="abs mono" style="left:2px;top:231px">19</div>
<div class="abs mono" style="left:55px;top:231px">2.55</div>
<div class="abs mono" style="left:108.25px;top:231px">35.78</div>
<div class="abs mono" style="left:161.5px;top:231px">-2.628</div>
<div class="abs mono" style="left:214.75px;top:231px">35.876</div>
<div class="abs mono" style="left:268px;top:231px">-4.2008</div>
<div class="abs mono" style="left:321.25px;top:231px">0</div>
<div class="abs mono" style="left:374.5px;top:231px">0</div>
<div class="abs mono" style="left:427.75px;top:231px">57</div>
<div class="abs mono" style="left:481px;top:231px">0</div>
  </div>
  <div id="dvhs" class="abs">
    <svg class="abs" style="left:3px;top:2px" width="7" height="8" viewBox="0 0 7 8"><path d="M4.8 1L1.8 4l3 3" fill="none" stroke="#3c3c3c" stroke-width="1.5"/></svg>
    <div class="thumb" style="left:13px;top:0;width:12.5px;height:11px"></div>
    <svg class="abs" style="left:490px;top:2px" width="7" height="8" viewBox="0 0 7 8"><path d="M2.2 1l3 3l-3 3" fill="none" stroke="#3c3c3c" stroke-width="1.5"/></svg>
  </div>
</div>

<div id="deskstrip" class="abs"></div>
<!-- ================= Notepad ================= -->
<div id="np" class="abs">
  <svg class="abs" style="left:7.5px;top:4px" width="12" height="14" viewBox="0 0 12 14"><g transform="rotate(4 6 7)"><path d="M1.4 2.4h9v8.4l-1.4 1.6h-7.6z" fill="#9ed3e4" stroke="#86b9cc" stroke-width="0.7"/><path d="M1.6 11.6h7.4l1.2-1.2" fill="none" stroke="#ece2c8" stroke-width="1.1"/><path d="M2.6 1.2v2M4.6 1.2v2M6.6 1.2v2M8.6 1.2v2" stroke="#e3e6de" stroke-width="1"/><path d="M2.8 5.4h6.2M2.8 7.4h6.2M2.8 9.2h5" stroke="#84c2d8" stroke-width="0.7"/></g></svg>
  <div class="cap abs"><span>l-eis-f-1.txt - 记事本</span></div>
  <div class="abs" style="left:244.5px;top:9px;width:6px;height:2px;background:#2b2b2b"></div>
  <svg class="abs" style="left:264px;top:4px" width="10" height="8" viewBox="0 0 10 8"><rect x="0.9" y="0.9" width="7.6" height="5.6" fill="none" stroke="#2b2b2b" stroke-width="1.1"/><path d="M0.9 1.5h7.6" stroke="#2b2b2b" stroke-width="1.8"/></svg>
  <div class="abs" style="left:277.5px;top:0;width:34.5px;height:15px;background:#c75050"></div>
  <svg class="abs" style="left:291.5px;top:4px" width="8" height="8" viewBox="0 0 8 8"><path d="M1 1l5.6 5.6M6.6 1l-5.6 5.6" stroke="#fff" stroke-width="1.4"/></svg>
  <div id="npmenu" class="abs">
    <span style="left:5px">文件(F)</span><span style="left:44px">编辑(E)</span><span style="left:84px">格式(O)</span><span style="left:125.5px">查看(V)</span><span style="left:166px">帮助(H)</span>
  </div>
  <div id="npframe" class="abs"></div>
  <div id="nptext" class="abs"><pre>Data Source:  Experiment
Instrument Model:  CHI660C
Header:
Note:

Init E (V) = 0.716
High Frequency (Hz) = 1e+5
Low Frequency (Hz) = 0.1
Amplitude (V) = 0.01
Quiet Time (sec) = 2
Cycles (.1-1Hz) = 1

Freq/Hz,   Z'/ohm,   Z"/ohm,   Z/ohm,   Phase/de

9.668e+4, 2.397e+1, -1.154e+0, 2.400e+1, -2.8
8.105e+4, 2.399e+1, -1.068e+0, 2.401e+1, -2.5
6.641e+4, 2.410e+1, -1.017e+0, 2.412e+1, -2.4
5.469e+4, 2.405e+1, -1.012e+0, 2.407e+1, -2.4
4.590e+4, 2.414e+1, -1.015e+0, 2.417e+1, -2.4
3.711e+4, 2.422e+1, -9.914e-1, 2.424e+1, -2.3
3.125e+4, 2.421e+1, -1.163e+0, 2.424e+1, -2.7
2.539e+4, 2.441e+1, -1.263e+0, 2.444e+1, -3.0
2.148e+4, 2.462e+1, -1.354e+0, 2.466e+1, -3.1
1.758e+4, 2.475e+1, -1.386e+0, 2.479e+1, -3.2
1.465e+4, 2.496e+1, -1.454e+0, 2.500e+1, -3.3
1.172e+4, 2.509e+1, -1.609e+0, 2.514e+1, -3.7
9.668e+3, 2.547e+1, -1.597e+0, 2.552e+1, -3.6
8.105e+3, 2.572e+1, -1.631e+0, 2.577e+1, -3.6
6.641e+3, 2.599e+1, -1.676e+0, 2.605e+1, -3.7
5.469e+3, 2.626e+1, -1.625e+0, 2.631e+1, -3.5
4.590e+3, 2.651e+1, -1.619e+0, 2.656e+1, -3.5
3.711e+3, 2.673e+1, -1.521e+0, 2.678e+1, -3.3
3.125e+3, 2.696e+1, -1.463e+0, 2.700e+1, -3.1
2.539e+3, 2.712e+1, -1.335e+0, 2.716e+1, -2.8
2.148e+3, 2.730e+1, -1.273e+0, 2.732e+1, -2.7
1.758e+3, 2.740e+1, -1.196e+0, 2.743e+1, -2.5
1.465e+3, 2.757e+1, -1.137e+0, 2.760e+1, -2.4
1.172e+3, 2.768e+1, -1.042e+0, 2.770e+1, -2.2
9.668e+2, 2.797e+1, -8.756e-1, 2.798e+1, -1.8
8.105e+2, 2.805e+1, -8.375e-1, 2.807e+1, -1.7
6.641e+2, 2.815e+1, -8.738e-1, 2.816e+1, -1.8
5.469e+2, 2.823e+1, -8.198e-1, 2.824e+1, -1.7</pre></div>
  <div id="npvs" class="abs">
    <svg class="abs" style="left:1.8px;top:4.5px" width="8" height="6" viewBox="0 0 8 6"><path d="M1 4.6l2.8-3l2.8 3" fill="none" stroke="#505050" stroke-width="1.4"/></svg>
    <div class="thumb" style="left:0;top:30px;width:11.5px;height:228px"></div>
    <svg class="abs" style="left:1.8px;top:507px" width="8" height="6" viewBox="0 0 8 6"><path d="M1 1.2l2.8 3l2.8-3" fill="none" stroke="#505050" stroke-width="1.4"/></svg>
  </div>
  <div id="nphs" class="abs">
    <svg class="abs" style="left:3px;top:2.5px" width="6" height="8" viewBox="0 0 6 8"><path d="M4.4 1L1.4 3.8l3 2.8" fill="none" stroke="#505050" stroke-width="1.4"/></svg>
    <div class="thumb" style="left:12.5px;top:0;width:260px;height:11px"></div>
    <svg class="abs" style="left:281.5px;top:2px" width="6" height="8" viewBox="0 0 6 8"><path d="M1.4 1l3 2.8l-3 2.8" fill="none" stroke="#505050" stroke-width="1.4"/></svg>
  </div>
  <div id="npcorner" class="abs"><svg class="abs" style="left:2.5px;top:4.5px" width="8" height="8" viewBox="0 0 8 8"><g fill="#b9b9b9"><rect x="5.6" y="0.4" width="1.2" height="1.2"/><rect x="3.2" y="2.8" width="1.2" height="1.2"/><rect x="5.6" y="2.8" width="1.2" height="1.2"/><rect x="0.8" y="5.2" width="1.2" height="1.2"/><rect x="3.2" y="5.2" width="1.2" height="1.2"/><rect x="5.6" y="5.2" width="1.2" height="1.2"/></g></svg></div>
</div>

</div>
</body>
</html>
